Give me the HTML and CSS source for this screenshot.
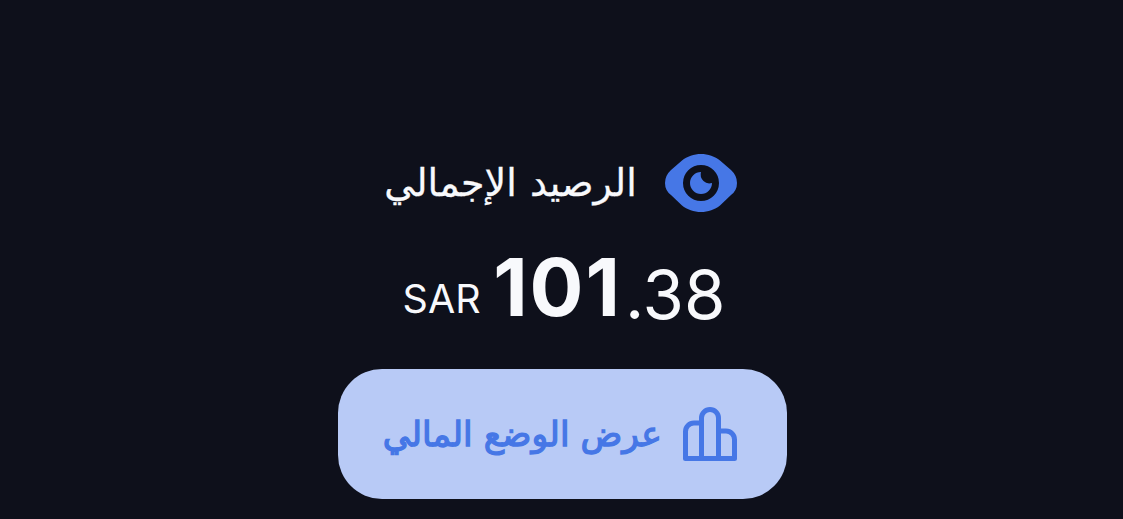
FILE: index.html
```html
<!DOCTYPE html>
<html lang="ar" dir="rtl">
<head>
<meta charset="utf-8">
<title>الرصيد الإجمالي</title>
<link rel="stylesheet" href="styles.css">
</head>
<body>
<main class="balance">
  <div class="heading">
    <svg class="eye" viewBox="0 0 72 58" width="72" height="58">
      <path fill="#4677e6" fill-rule="evenodd" d="M36 0C43 0 50 2.500 55 6.500L66 16Q72 21.500 72 29T66 41L55 51.500C50 55.500 43 58 36 58S22 55.500 17 51.500L6 41Q0 36.500 0 29T6 16L17 6.500C22 2.500 29 0 36 0ZM36 11a18 18 0 1 0 0 36a18 18 0 0 0 0-36Z"/>
      <path fill="#4677e6" d="M36 18A11 11 0 1 0 47 29Q42 30.500 38.500 27Q34.500 23 36 18Z"/>
    </svg>
    <span class="title">الرصيد الإجمالي</span>
  </div>
  <div class="amount" dir="ltr">
    <span class="currency">SAR</span><span class="whole">101</span><span class="fraction">.38</span>
  </div>
  <button class="status" type="button">
    <svg class="chart" viewBox="0 0 54 54" width="54" height="54" fill="none" stroke="#4677e6" stroke-width="5" stroke-linejoin="round">
      <path d="M18.500 51V11a8.500 8.500 0 0 1 17 0V51M18.500 16H11A8.500 8.500 0 0 0 2.500 24.500V51.500H51.500V32.500a8.500 8.500 0 0 0-8.500-8.500H35.500"/>
    </svg>
    <span class="label">عرض الوضع المالي</span>
  </button>
</main>
</body>
</html>
```
FILE: styles.css
```css
body { margin: 0; background: #0e101b; color: #f8f9fc; font-family: Inter, "Noto Sans", "DejaVu Sans", sans-serif; }
.balance { box-sizing: border-box; width: 1123px; height: 519px; padding: 154px 0 0 2px; display: flex; flex-direction: column; align-items: center; }
.heading { height: 58px; display: flex; align-items: center; gap: 28px; margin-right: 4px; }
.title { font: 38px/58px "DejaVu Sans", sans-serif; word-spacing: 1px; -webkit-text-stroke: 0.3px currentColor; }
.amount { height: 100px; margin-top: 25px; display: flex; align-items: baseline; line-height: 100px; padding-left: 3px; }
.currency { font-size: 39.5px; margin-right: 12.5px; transform: translateY(-3px); }
.whole { font-size: 80px; font-weight: 700; letter-spacing: 2px; margin-right: 3px; }
.fraction { font-size: 67px; transform: translateY(3px); }
.status { width: 449px; height: 130px; margin-top: 32px; border: 0; border-radius: 44px; padding: 0 50px 0 0; display: flex; align-items: center; justify-content: flex-start; gap: 21px; background: #b8caf6; color: #4677e6; }
.label { font: 34.6px/60px "DejaVu Sans", sans-serif; -webkit-text-stroke: 1.3px currentColor; }
```
